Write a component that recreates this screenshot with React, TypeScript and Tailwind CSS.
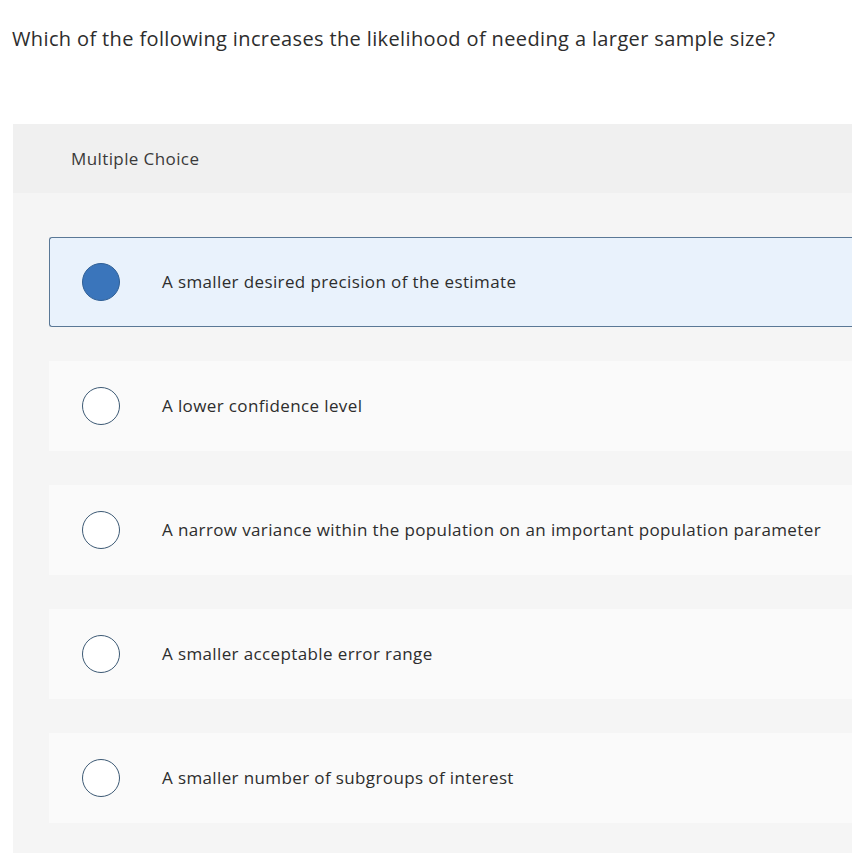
const options = [
  'A smaller desired precision of the estimate',
  'A lower confidence level',
  'A narrow variance within the population on an important population parameter',
  'A smaller acceptable error range',
  'A smaller number of subgroups of interest',
];

const selected = 0;

export default function App() {
  return (
    <div className="min-h-[853px] bg-white font-['Open_Sans',sans-serif] text-[#333]">
      <div className="pl-3 pt-[26px] pb-[72px]">
        <p className="text-[20px] leading-[26px] tracking-[0.37px] text-[#2d2d2d]">
          Which of the following increases the likelihood of needing a larger sample size?
        </p>
      </div>

      <div className="ml-[13px]">
        {/* Header */}
        <div className="h-[69px] bg-[#f0f0f0] pl-[58px] flex items-center">
          <span className="text-[17px] tracking-[0.4px] text-[#3a3a3a]">Multiple Choice</span>
        </div>

        {/* Choices */}
        <div className="bg-[#f5f5f5] pl-9 pt-[44px] pb-10 flex flex-col gap-[34px]">
          {options.map((label, i) => {
            const isSelected = i === selected;
            return (
              <div
                key={label}
                className={
                  isSelected
                    ? 'h-[90px] flex items-center rounded-l-[3px] border border-r-0 border-[#5a7896] bg-[#e9f2fc]'
                    : 'h-[90px] flex items-center bg-[#fafafa] border border-transparent'
                }
              >
                <span
                  className={
                    isSelected
                      ? 'ml-[32px] w-[38px] h-[38px] rounded-full bg-[#3a75bb] border border-[#2f5f95]'
                      : 'ml-[32px] w-[38px] h-[38px] rounded-full bg-white border border-[#3d5a75]'
                  }
                />
                <span className="ml-[42px] text-[17px] tracking-[0.38px] text-[#2d2d2d]">{label}</span>
              </div>
            );
          })}
        </div>
      </div>
    </div>
  );
}
